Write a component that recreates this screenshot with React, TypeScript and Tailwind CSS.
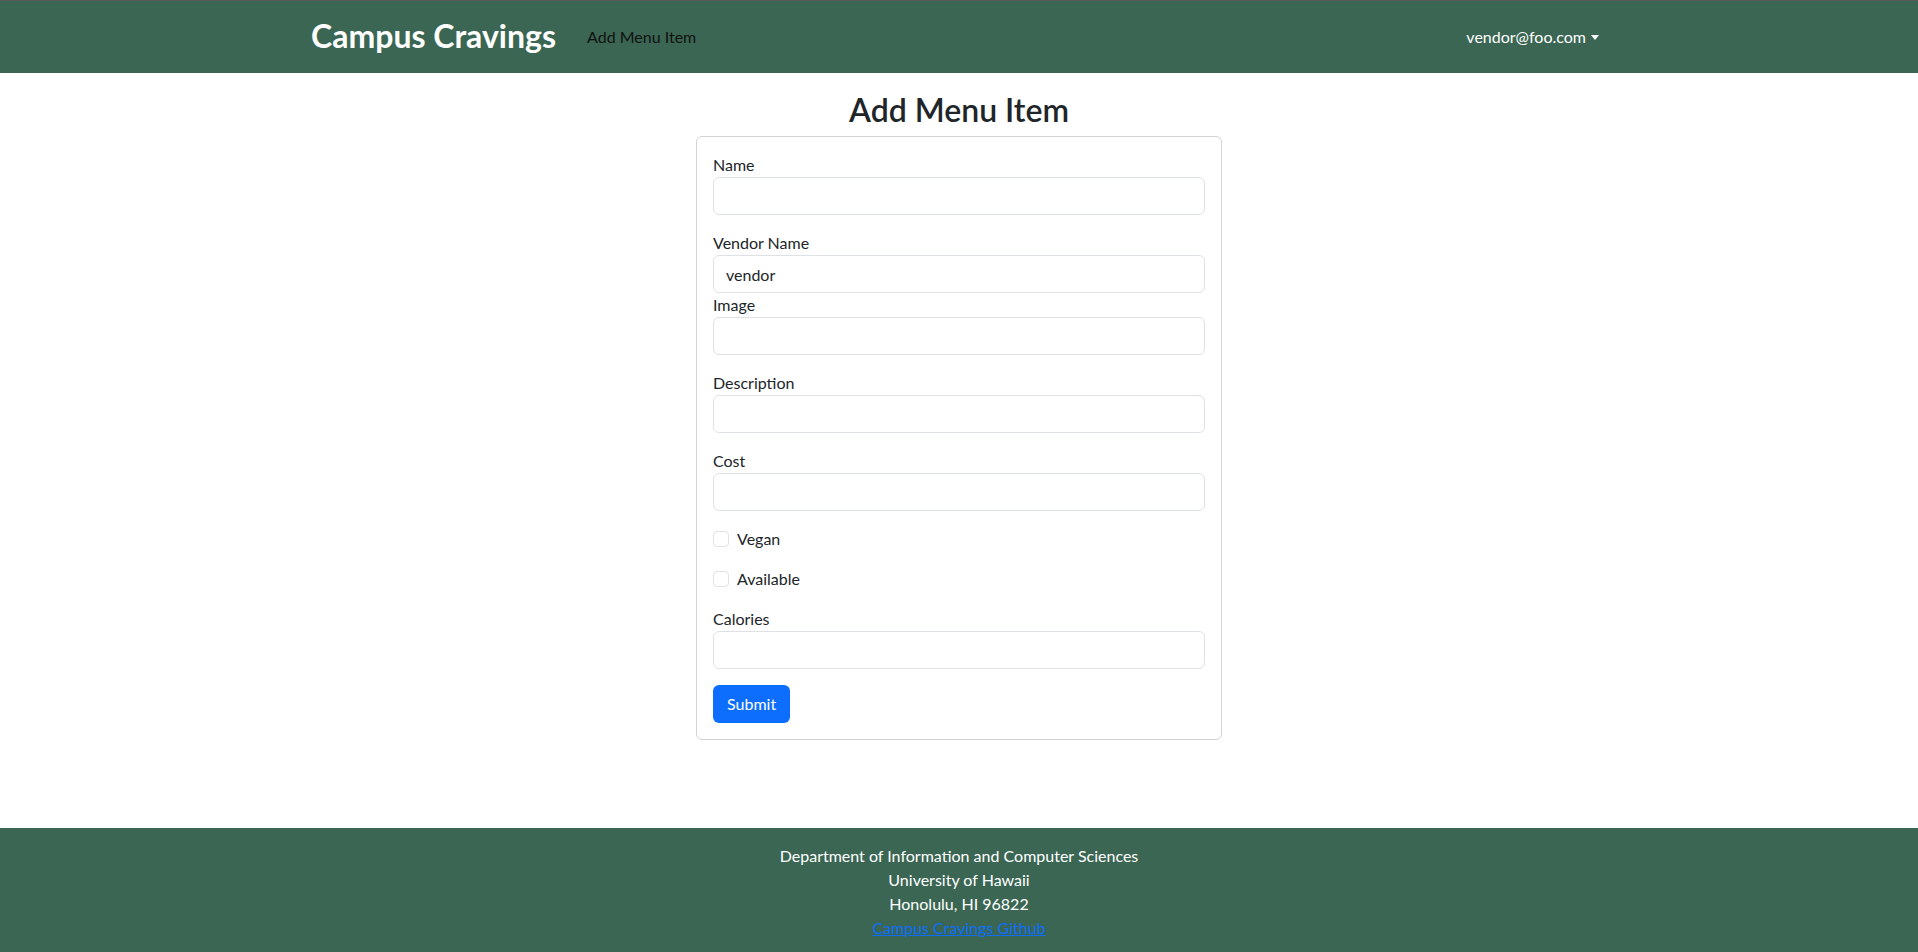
import React from "react";

const font = "font-['Lato',sans-serif]";

const TextField: React.FC<{ label: string; value?: string; spaced?: boolean }> = ({
  label,
  value,
  spaced = true,
}) => (
  <div className={spaced ? "mb-4" : ""}>
    <label className="block leading-6">{label}</label>
    <input
      type="text"
      defaultValue={value}
      className="block h-[38px] w-full rounded-md border border-[#dee2e6] bg-white px-3 py-1.5 leading-6 text-[#212529] outline-none"
    />
  </div>
);

const CheckField: React.FC<{ label: string }> = ({ label }) => (
  <div className="mb-4 flex h-6 items-center gap-2">
    <input
      type="checkbox"
      className="h-4 w-4 appearance-none rounded-[4px] border border-[#dee2e6] bg-white"
    />
    <label className="leading-6">{label}</label>
  </div>
);

const App: React.FC = () => {
  return (
    <div className={`flex min-h-screen flex-col bg-white text-base text-[#212529] ${font}`}>
      {/* Navbar */}
      <nav className="h-[73px] border-t border-[#5a5a5a] bg-[#3a6653]">
        <div className="mx-auto flex h-full max-w-[1320px] items-center px-3 pb-1">
          <a href="#" className="mr-[31px] mt-0.5 text-[32px] font-bold leading-none text-white">
            Campus Cravings
          </a>
          <a href="#" className="mt-1 text-[#111]">
            Add Menu Item
          </a>
          <div className="ml-auto mt-1 flex items-center pr-2 text-white">
            vendor@foo.com
            <span className="ml-[5px] inline-block border-x-[4px] border-t-[5px] border-x-transparent border-t-white" />
          </div>
        </div>
      </nav>

      {/* Main */}
      <main className="flex-1 pb-4 pt-[17px]">
        <h2 className="mb-2 pt-0.5 text-center text-[32px] font-semibold leading-[36px]">Add Menu Item</h2>
        <div className="mx-auto w-[526px] rounded-md border border-[#d3d3d3] bg-white p-4">
          <TextField label="Name" />
          <TextField label="Vendor Name" value="vendor" spaced={false} />
          <TextField label="Image" />
          <TextField label="Description" />
          <TextField label="Cost" />
          <CheckField label="Vegan" />
          <CheckField label="Available" />
          <TextField label="Calories" />
          <button className="h-[38px] rounded-md bg-[#0d6efd] px-[14px] text-white">Submit</button>
        </div>
      </main>

      {/* Footer */}
      <footer className="h-[124px] bg-[#3a6653] pt-4 text-center leading-6 text-white">
        <div>Department of Information and Computer Sciences</div>
        <div>University of Hawaii</div>
        <div>Honolulu, HI 96822</div>
        <a href="#" className="text-[#0d6efd] underline">
          Campus Cravings Github
        </a>
      </footer>
    </div>
  );
};

export default App;
